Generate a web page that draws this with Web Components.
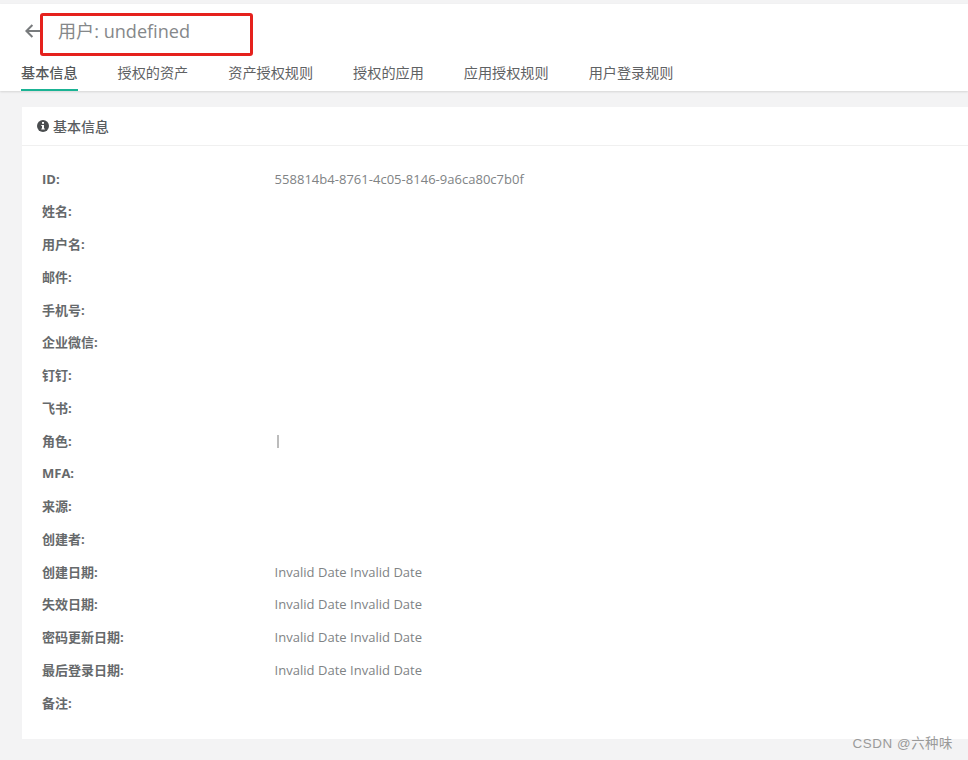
<!DOCTYPE html>
<html lang="zh">
<head>
<meta charset="utf-8">
<title>用户详情</title>
<style>
  html, body { margin: 0; height: 100%; overflow: hidden; }
  body {
    background: #f3f3f4;
    font-family: "Open Sans", "Noto Sans CJK SC", sans-serif;
    color: #676a6c;
  }
</style>
</head>
<body>
<user-page>
  <page-header slot="header" title="用户: undefined">
    <tab-item active>基本信息</tab-item>
    <tab-item>授权的资产</tab-item>
    <tab-item>资产授权规则</tab-item>
    <tab-item>授权的应用</tab-item>
    <tab-item>应用授权规则</tab-item>
    <tab-item>用户登录规则</tab-item>
  </page-header>
  <info-card heading="基本信息">
    <info-row label="ID:">558814b4-8761-4c05-8146-9a6ca80c7b0f</info-row>
    <info-row label="姓名:"></info-row>
    <info-row label="用户名:"></info-row>
    <info-row label="邮件:"></info-row>
    <info-row label="手机号:"></info-row>
    <info-row label="企业微信:"></info-row>
    <info-row label="钉钉:"></info-row>
    <info-row label="飞书:"></info-row>
    <info-row label="角色:"><role-mark></role-mark></info-row>
    <info-row label="MFA:"></info-row>
    <info-row label="来源:"></info-row>
    <info-row label="创建者:"></info-row>
    <info-row label="创建日期:">Invalid Date Invalid Date</info-row>
    <info-row label="失效日期:">Invalid Date Invalid Date</info-row>
    <info-row label="密码更新日期:">Invalid Date Invalid Date</info-row>
    <info-row label="最后登录日期:">Invalid Date Invalid Date</info-row>
    <info-row label="备注:"></info-row>
  </info-card>
  <span slot="watermark">CSDN @六种味</span>
</user-page>

<script>
const FONT = `"Open Sans", "Noto Sans CJK SC", sans-serif`;

// small helper so every element below is set up the same way
class Base extends HTMLElement {
  constructor() {
    super();
    this.dom = this.attachShadow({ mode: "open" });
  }
}

class UserPage extends Base {
  connectedCallback() {
    this.dom.innerHTML = `
      <style>
        :host { display: block; position: relative; height: 760px; overflow: hidden; padding-top: 4px; box-sizing: border-box; }
        .body { padding: 16px 0 0 22px; }
        .mark {
          position: absolute; right: 15px; top: 735px;
          font: 13.4px/17px "Liberation Sans", "Noto Sans CJK SC", sans-serif;
          letter-spacing: .55px; color: #9a9a9a;
        }
      </style>
      <slot name="header"></slot>
      <div class="body"><slot></slot></div>
      <div class="mark"><slot name="watermark"></slot></div>
    `;
  }
}

class PageHeader extends Base {
  connectedCallback() {
    this.dom.innerHTML = `
      <style>
        :host { display: block; background: #fff; height: 87px; box-sizing: border-box; box-shadow: 0 1px 2px rgba(0,0,0,.12); position: relative; }
        .top { display: flex; align-items: center; height: 54px; padding-left: 25px; box-sizing: border-box; }
        svg { width: 15px; height: 14px; display: block; }
        h1 { margin: 0 0 0 18px; font: 400 18.1px/26px ${FONT}; color: #85888a; }
        .tabs { display: flex; gap: 40px; padding-left: 21px; }
        /* the red box was drawn over the screenshot */
        .note {
          position: absolute; left: 40px; top: 9px; width: 213px; height: 43px;
          box-sizing: border-box; border: 3px solid #e5211d; border-radius: 3px;
        }
      </style>
      <div class="top">
        <svg viewBox="0 0 15 14" fill="none" stroke="#787b7d" stroke-width="2">
          <path d="M15 7H1.8M7.4 1 1.4 7l6 6"/>
        </svg>
        <h1>${this.getAttribute("title")}</h1>
      </div>
      <div class="tabs"><slot></slot></div>
      <div class="note"></div>
    `;
  }
}

class TabItem extends Base {
  connectedCallback() {
    this.dom.innerHTML = `
      <style>
        :host { display: block; height: 33px; font: 400 14.15px/30px ${FONT}; color: #5f6264; box-sizing: border-box; }
        :host([active]) { border-bottom: 2px solid #1ab394; font-weight: 500; color: #55585a; }
      </style>
      <slot></slot>
    `;
  }
}

class InfoCard extends Base {
  connectedCallback() {
    this.dom.innerHTML = `
      <style>
        :host { display: block; background: #fff; height: 632px; }
        header {
          display: flex; align-items: center; gap: 4px; height: 39px; padding: 1px 0 0 15px;
          box-sizing: border-box; border-bottom: 1px solid #f0f0f0;
          font: 500 14px/20px ${FONT}; color: #5a5d5f;
        }
        svg { width: 12px; height: 12px; display: block; margin-top: -1px; }
        .rows { padding: 16.25px 0 0 20px; }
      </style>
      <header>
        <svg viewBox="0 0 12 12">
          <circle cx="6" cy="6" r="6" fill="#4a4d4f"/>
          <rect x="5" y="2" width="2" height="1.8" fill="#fff"/>
          <path d="M4.3 4.9H7v3.6h.8v1H4.3v-1H5V5.9h-.7z" fill="#fff"/>
        </svg>
        <span>${this.getAttribute("heading")}</span>
      </header>
      <div class="rows"><slot></slot></div>
    `;
  }
}

class InfoRow extends Base {
  connectedCallback() {
    this.dom.innerHTML = `
      <style>
        :host { display: grid; grid-template-columns: 232.6px 1fr; height: 32.75px; align-items: center; font: 400 13px/20px ${FONT}; }
        .label { font-weight: 700; color: #66696b; }
        .value { color: #808385; letter-spacing: .02px; }
      </style>
      <div class="label">${this.getAttribute("label")}</div>
      <div class="value"><slot></slot></div>
    `;
  }
}

class RoleMark extends Base {
  connectedCallback() {
    this.dom.innerHTML = `
      <style>
        :host { display: block; width: 2px; height: 13px; margin: 2px 0 0 2px; background: #bcbcbc; }
      </style>
    `;
  }
}

customElements.define("user-page", UserPage);
customElements.define("page-header", PageHeader);
customElements.define("tab-item", TabItem);
customElements.define("info-card", InfoCard);
customElements.define("info-row", InfoRow);
customElements.define("role-mark", RoleMark);
</script>
</body>
</html>
